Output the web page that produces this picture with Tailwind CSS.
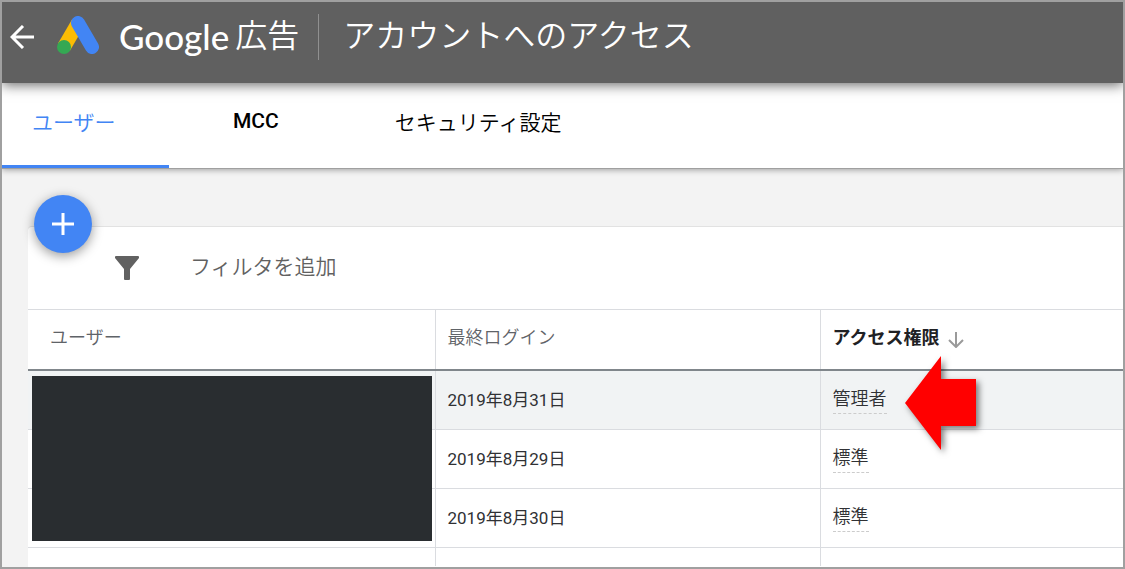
<!DOCTYPE html>
<html lang="ja">
<head>
<meta charset="utf-8">
<meta name="viewport" content="width=device-width, initial-scale=1">
<title>アカウントへのアクセス - Google 広告</title>
<script src="https://cdn.jsdelivr.net/npm/@tailwindcss/browser@4"></script>
</head>
<body class="flex min-h-screen flex-col border-2 border-[#a0a0a0] bg-[#f3f3f3] font-['Roboto','Noto_Sans_CJK_JP',sans-serif] text-[#202124]">
  <header class="relative z-20 flex h-[81px] shrink-0 items-start bg-[#606060] text-white shadow-[0_2px_12px_rgba(0,0,0,0.6)]">
    <button type="button" aria-label="戻る" class="mt-[23px] ml-2 size-6">
      <svg viewBox="0 0 24 24" class="size-6" fill="none" stroke="currentColor" stroke-width="3"><path d="M24 12H2M13 1 2 12l11 11"/></svg>
    </button>
    <svg viewBox="0 0 42 38" class="mt-[14px] ml-[23px] h-[38px] w-[42px]" aria-hidden="true">
      <path d="M21 7 7 31" stroke="#fbbc04" stroke-width="14" fill="none"/>
      <path d="M21 7l14 24" stroke="#4285f4" stroke-width="14" stroke-linecap="round" fill="none"/>
      <circle cx="7" cy="31" r="7" fill="#34a853"/>
    </svg>
    <div class="mt-[10px] ml-5 flex h-12 items-center gap-[6px]">
      <span class="font-['Lato',sans-serif] text-[35px] leading-[48px] font-medium">Google</span>
      <span class="text-[32px] leading-[48px] font-[350]">広告</span>
    </div>
    <div class="mt-3 ml-[19px] h-[46px] w-px bg-[#909090]"></div>
    <h1 class="mt-[10px] ml-6 text-[32px] leading-[48px] font-[350] whitespace-nowrap">アカウントへのアクセス</h1>
  </header>

  <nav class="relative z-10 flex h-[86px] shrink-0 border-b border-[#a0a0a0] bg-white text-[21px] leading-8 shadow-[0_1px_6px_rgba(0,0,0,0.35)]">
    <a href="#users" aria-current="page" class="w-[167px] border-b-3 border-[#4285f4] pt-6 pl-[30px] font-[350] text-[#4285f4]">ユーザー</a>
    <a href="#mcc" class="pt-[22px] pl-16 font-medium text-black">MCC</a>
    <a href="#security" class="pt-6 pl-[116px] font-[350] text-black">セキュリティ設定</a>
  </nav>

  <main class="relative flex grow flex-col pt-[57px] pl-[26px]">
    <button type="button" aria-label="ユーザーを追加" class="absolute top-[26px] left-8 flex size-[58px] items-center justify-center rounded-full bg-[#4285f4] text-white shadow-[0_3px_12px_rgba(0,0,0,0.4)]">
      <svg viewBox="0 0 22 22" class="size-[22px]" fill="none" stroke="currentColor" stroke-width="3"><path d="M0 11h22M11 0v22"/></svg>
    </button>
    <section class="grow rounded-tl border-t border-[#e2e2e2] bg-white">
      <div class="flex h-[82px] items-start">
        <svg viewBox="0 0 24 24" class="mt-[29px] ml-[87px] size-6" fill="#616161" aria-hidden="true"><path d="M1 0h22q1 0 1 1v1L15 13v10q0 1-1 1h-4q-1 0-1-1V13L0 2V1q0-1 1-1z"/></svg>
        <button type="button" class="mt-6 ml-[51px] text-[21px] leading-8 font-[350] text-[#616161]">フィルタを追加</button>
      </div>
      <table class="w-full table-fixed border-collapse text-left text-[18px] leading-7">
        <colgroup><col class="w-[407px]"><col class="w-[385px]"><col></colgroup>
        <thead>
          <tr class="h-[60px] border-t border-b-2 border-t-[#dadce0] border-b-[#80868b] align-top">
            <th scope="col" class="pt-[14px] pl-[22px] font-[350] text-[#5f6368]">ユーザー</th>
            <th scope="col" class="border-l border-[#dadce0] pt-[14px] pl-3 font-[350] text-[#5f6368]">最終ログイン</th>
            <th scope="col" aria-sort="descending" class="border-l border-[#dadce0] pt-[14px] pl-3 font-bold">
              <button type="button" class="flex items-center gap-2">アクセス権限
                <svg viewBox="0 0 16 16" class="mt-1 size-4" fill="none" stroke="#9a9a9a" stroke-width="2" aria-hidden="true"><path d="M8 0v15M1 8l7 7 7-7"/></svg>
              </button>
            </th>
          </tr>
        </thead>
        <tbody class="align-top text-[#303134]">
          <tr class="h-[60px] border-b border-[#dadce0] bg-[#f1f3f4]">
            <td class="relative"><div class="absolute top-[5px] right-[3px] left-1 h-[165px] bg-[#292d30]"></div></td>
            <td class="border-l border-[#dadce0] pt-[15px] pl-3 text-[17px]">2019年8月31日</td>
            <td class="relative border-l border-[#dadce0] pt-[14px] pl-3">
              <a href="#role-1" class="inline-block border-b border-dashed border-[#ccc] font-[350]">管理者</a>
              <svg viewBox="0 0 71 94" class="absolute -top-[15px] left-[84px] z-10 h-[94px] w-[71px] overflow-visible drop-shadow-[3px_3px_3px_rgba(0,0,0,0.5)]" aria-hidden="true"><path d="M0 47 36 0v23h35v47H36v24z" fill="#f00"/></svg>
            </td>
          </tr>
          <tr class="h-[59px] border-b border-[#dadce0]">
            <td></td>
            <td class="border-l border-[#dadce0] pt-[15px] pl-3 text-[17px]">2019年8月29日</td>
            <td class="border-l border-[#dadce0] pt-[14px] pl-3"><a href="#role-2" class="inline-block border-b border-dashed border-[#ccc] font-[350]">標準</a></td>
          </tr>
          <tr class="h-[59px] border-b border-[#dadce0]">
            <td></td>
            <td class="border-l border-[#dadce0] pt-[15px] pl-3 text-[17px]">2019年8月30日</td>
            <td class="border-l border-[#dadce0] pt-[14px] pl-3"><a href="#role-3" class="inline-block border-b border-dashed border-[#ccc] font-[350]">標準</a></td>
          </tr>
          <tr class="h-[18px]">
            <td></td>
            <td class="border-l border-[#dadce0]"></td>
            <td class="border-l border-[#dadce0]"></td>
          </tr>
        </tbody>
      </table>
    </section>
  </main>
</body>
</html>
